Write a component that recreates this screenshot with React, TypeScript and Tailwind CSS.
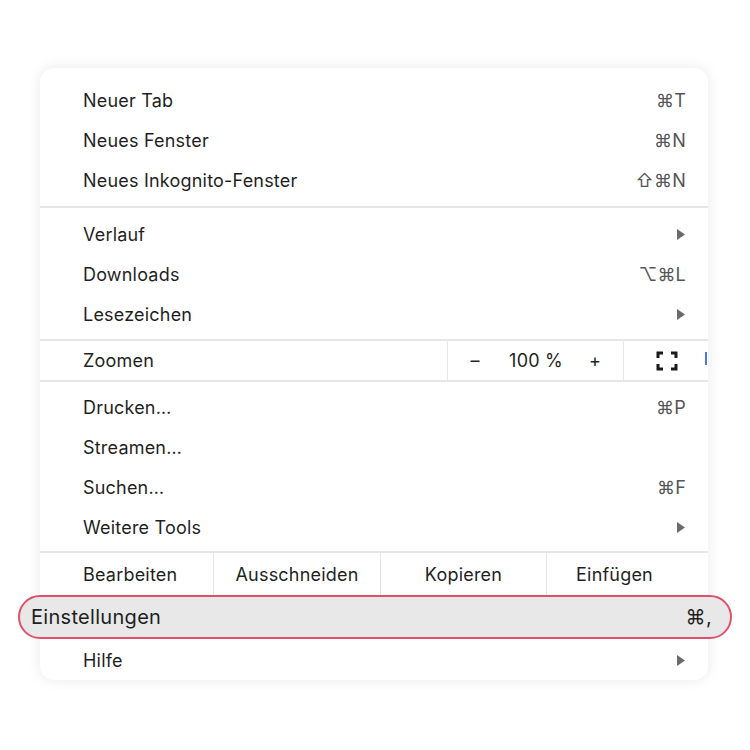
const font = { fontFamily: "Inter, 'Liberation Sans', sans-serif" };

type Item = { label: string; shortcut?: string; arrow?: boolean };

const group1: Item[] = [
  { label: "Neuer Tab", shortcut: "⌘T" },
  { label: "Neues Fenster", shortcut: "⌘N" },
  { label: "Neues Inkognito-Fenster", shortcut: "⇧⌘N" },
];

const group2: Item[] = [
  { label: "Verlauf", arrow: true },
  { label: "Downloads", shortcut: "⌥⌘L" },
  { label: "Lesezeichen", arrow: true },
];

const group3: Item[] = [
  { label: "Drucken…", shortcut: "⌘P" },
  { label: "Streamen…" },
  { label: "Suchen…", shortcut: "⌘F" },
  { label: "Weitere Tools", arrow: true },
];

function Arrow() {
  return (
    <svg width="8" height="11" viewBox="0 0 8 11" className="mr-[1px]">
      <path d="M0 0 L8 5.5 L0 11 Z" fill="#6b6b6b" />
    </svg>
  );
}

function Row({ item }: { item: Item }) {
  return (
    <div className="flex h-10 items-center justify-between pl-[43px] pr-[22px] text-[18px] tracking-[0.2px]">
      <span className="text-[#1f1f1f]">{item.label}</span>
      {item.shortcut && <span className="text-[#555]">{item.shortcut}</span>}
      {item.arrow && <Arrow />}
    </div>
  );
}

function Sep() {
  return <div className="h-[2px] bg-[#e6e6e6]" />;
}

function FullscreenIcon() {
  return (
    <svg width="22" height="20" viewBox="0 0 22 20" fill="none" stroke="#1a1a1a" strokeWidth="3">
      <path d="M2 7 V2 H7" />
      <path d="M15 2 H20 V7" />
      <path d="M2 13 V18 H7" />
      <path d="M15 18 H20 V13" />
    </svg>
  );
}

export default function App() {
  return (
    <div className="min-h-[750px] w-[750px] bg-white pt-[68px] pl-[40px]" style={font}>
      <div className="relative w-[668px] rounded-[14px] bg-white shadow-[0_0_14px_rgba(0,0,0,0.09)]">
        <div className="pt-3 pb-[6px]">
          {group1.map((i) => (
            <Row key={i.label} item={i} />
          ))}
        </div>
        <Sep />
        <div className="pt-[6px] pb-[5px]">
          {group2.map((i) => (
            <Row key={i.label} item={i} />
          ))}
        </div>
        <Sep />
        <div className="flex h-[39px] items-center text-[18px] tracking-[0.2px] text-[#1f1f1f]">
          <div className="flex-1 pl-[43px]">Zoomen</div>
          <div className="flex h-full w-[176px] items-center border-l border-[#e6e6e6]">
            <span className="w-[54px] text-center">–</span>
            <span className="w-[68px] text-center">100 %</span>
            <span className="w-[50px] text-center">+</span>
          </div>
          <div className="flex h-full w-[85px] items-center justify-center border-l border-[#e6e6e6] pl-[2px]">
            <FullscreenIcon />
          </div>
        </div>
        <Sep />
        <div className="pt-[5px] pb-[4px]">
          {group3.map((i) => (
            <Row key={i.label} item={i} />
          ))}
        </div>
        <Sep />
        <div className="grid h-[42px] grid-cols-[173px_167px_166px_162px] text-[18px] tracking-[0.2px] text-[#1f1f1f]">
          <div className="flex items-center pl-[43px]">Bearbeiten</div>
          <div className="flex items-center justify-center border-l border-[#e6e6e6]">Ausschneiden</div>
          <div className="flex items-center justify-center border-l border-[#e6e6e6]">Kopieren</div>
          <div className="flex items-center justify-center border-l border-[#e6e6e6] pr-[26px]">Einfügen</div>
        </div>
        <div className="relative h-[43px]">
          <div className="absolute left-[-22px] right-[-24px] top-[0px] bottom-[-1px] flex items-center justify-between rounded-[22px] border-[2.5px] border-[#e1506a] bg-[#e8e8e8] pl-[11px] pr-[18px] text-[20px] tracking-[0.3px] text-[#1f1f1f]">
            <span>Einstellungen</span>
            <span>⌘,</span>
          </div>
        </div>
        <div className="pt-[2px]">
          <Row item={{ label: "Hilfe", arrow: true }} />
        </div>
        <div className="absolute right-[1px] top-[284px] h-[13px] w-[2px] bg-[#4a7bdc]" />
      </div>
    </div>
  );
}
